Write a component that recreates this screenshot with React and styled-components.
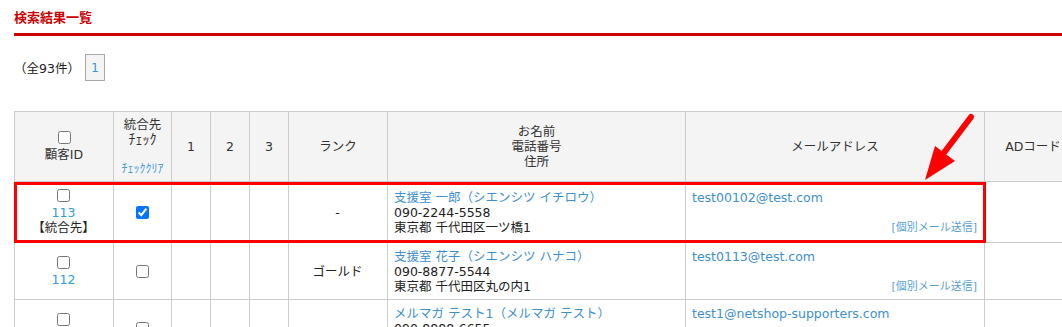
import React from 'react';
import styled, { createGlobalStyle } from 'styled-components';

const GlobalStyle = createGlobalStyle`
  html, body {
    margin: 0;
    padding: 0;
    background: #fff;
  }
  body {
    font-family: "DejaVu Sans", "Noto Sans CJK JP", sans-serif;
    font-size: 12.5px;
    color: #222;
    overflow: hidden;
  }
`;

const Page = styled.div`
  position: relative;
  width: 1062px;
  height: 327px;
  overflow: hidden;
  padding-left: 14px;
  box-sizing: border-box;
`;

const Title = styled.h2`
  margin: 0;
  padding: 8px 0 5px;
  font-size: 13px;
  line-height: 20px;
  font-weight: bold;
  color: #cc0000;
  border-bottom: 3px solid #cc0000;
  margin-right: -20px;
`;

const Pager = styled.div`
  display: flex;
  align-items: center;
  gap: 5px;
  margin-top: 18px;
  height: 27px;
`;

const PageNum = styled.span`
  display: flex;
  align-items: center;
  justify-content: center;
  width: 20px;
  height: 27px;
  box-sizing: border-box;
  border: 1px solid #a8a8a8;
  background: #f4f4f4;
  color: #3b97d8;
`;

const Table = styled.table`
  margin-top: 30px;
  border-collapse: collapse;
  table-layout: fixed;
  width: 1067px;
`;

const HeadRow = styled.tr`
  height: 70px;
`;

const Row = styled.tr`
  height: ${p => p.$h}px;
`;

const Th = styled.th`
  background: #f3f4f3;
  border: 1px solid #cccccc;
  font-weight: normal;
  color: #333;
  padding: 5px;
  text-align: center;
  vertical-align: middle;
  line-height: 15px;
  white-space: nowrap;
`;

const Td = styled.td`
  border: 1px solid #cccccc;
  padding: 5px 7px 5px 6px;
  vertical-align: middle;
  text-align: ${p => p.$align || 'center'};
  line-height: 15px;
  white-space: nowrap;
  overflow: hidden;
`;

const Check = styled.input.attrs({ type: 'checkbox' })`
  display: block;
  width: 13px;
  height: 13px;
  margin: 0 auto ${p => (p.$gap ? 3 : 0)}px;
`;

const MergeHead = styled.div`
  line-height: 14px;
`;

const Hankaku = styled.div`
  font-size: 14px;
  line-height: 14px;
`;

const ClearLink = styled.div`
  margin-top: 17px;
  font-size: 12px;
  line-height: 13px;
  color: #4a9bd6;
`;

const IdLink = styled.div`
  color: #2f9ce0;
`;

const NameLink = styled.div`
  color: #3d8fd0;
`;

const SendLink = styled.div`
  margin-top: 15px;
  text-align: right;
  font-size: 11px;
  color: #5a9fd4;
`;

const Highlight = styled.div`
  position: absolute;
  left: 14px;
  top: 182px;
  width: 972px;
  height: 61px;
  box-sizing: border-box;
  border: 3px solid #ff0000;
  pointer-events: none;
`;

const Arrow = styled.svg`
  position: absolute;
  left: 0;
  top: 0;
  pointer-events: none;
`;

const widths = [99, 58, 39, 39, 39, 99, 298, 299, 97];

const rows = [
  {
    id: '113',
    merged: true,
    checked: true,
    rank: '-',
    name: '支援室 一郎（シエンシツ イチロウ）',
    tel: '090-2244-5558',
    addr: '東京都 千代田区一ツ橋1',
    mail: 'test00102@test.com',
    h: 61,
  },
  {
    id: '112',
    rank: 'ゴールド',
    name: '支援室 花子（シエンシツ ハナコ）',
    tel: '090-8877-5544',
    addr: '東京都 千代田区丸の内1',
    mail: 'test0113@test.com',
    h: 57,
  },
  {
    id: '111',
    rank: '-',
    name: 'メルマガ テスト1（メルマガ テスト）',
    tel: '090-8888-6655',
    addr: '東京都 千代田区丸の内1',
    mail: 'test1@netshop-supporters.com',
    h: 57,
  },
];

export default function App() {
  return (
    <>
      <GlobalStyle />
      <Page>
        <Title>検索結果一覧</Title>
        <Pager>
          <span>（全93件）</span>
          <PageNum>1</PageNum>
        </Pager>
        <Table>
          <colgroup>
            {widths.map((w, i) => (
              <col key={i} style={{ width: w }} />
            ))}
          </colgroup>
          <thead>
            <HeadRow>
              <Th>
                <Check $gap />
                顧客ID
              </Th>
              <Th>
                <MergeHead>統合先</MergeHead>
                <Hankaku>ﾁｪｯｸ</Hankaku>
                <ClearLink>ﾁｪｯｸｸﾘｱ</ClearLink>
              </Th>
              <Th>1</Th>
              <Th>2</Th>
              <Th>3</Th>
              <Th>ランク</Th>
              <Th>
                お名前
                <br />
                電話番号
                <br />
                住所
              </Th>
              <Th>メールアドレス</Th>
              <Th>ADコード</Th>
            </HeadRow>
          </thead>
          <tbody>
            {rows.map(r => (
              <Row key={r.id} $h={r.h}>
                <Td>
                  <Check $gap />
                  <IdLink>{r.id}</IdLink>
                  {r.merged && <div>【統合先】</div>}
                </Td>
                <Td>
                  <Check defaultChecked={!!r.checked} />
                </Td>
                <Td />
                <Td />
                <Td />
                <Td>{r.rank}</Td>
                <Td $align="left">
                  <NameLink>{r.name}</NameLink>
                  <div>{r.tel}</div>
                  <div>{r.addr}</div>
                </Td>
                <Td $align="left">
                  <NameLink>{r.mail}</NameLink>
                  <SendLink>[個別メール送信]</SendLink>
                </Td>
                <Td />
              </Row>
            ))}
          </tbody>
        </Table>
        <Highlight />
        <Arrow width="1062" height="327" viewBox="0 0 1062 327">
          <line
            x1="971"
            y1="117"
            x2="943"
            y2="154"
            stroke="#ff0000"
            strokeWidth="6"
            strokeLinecap="round"
          />
          <polygon points="925,180 935,146 955,161" fill="#ff0000" />
        </Arrow>
      </Page>
    </>
  );
}
